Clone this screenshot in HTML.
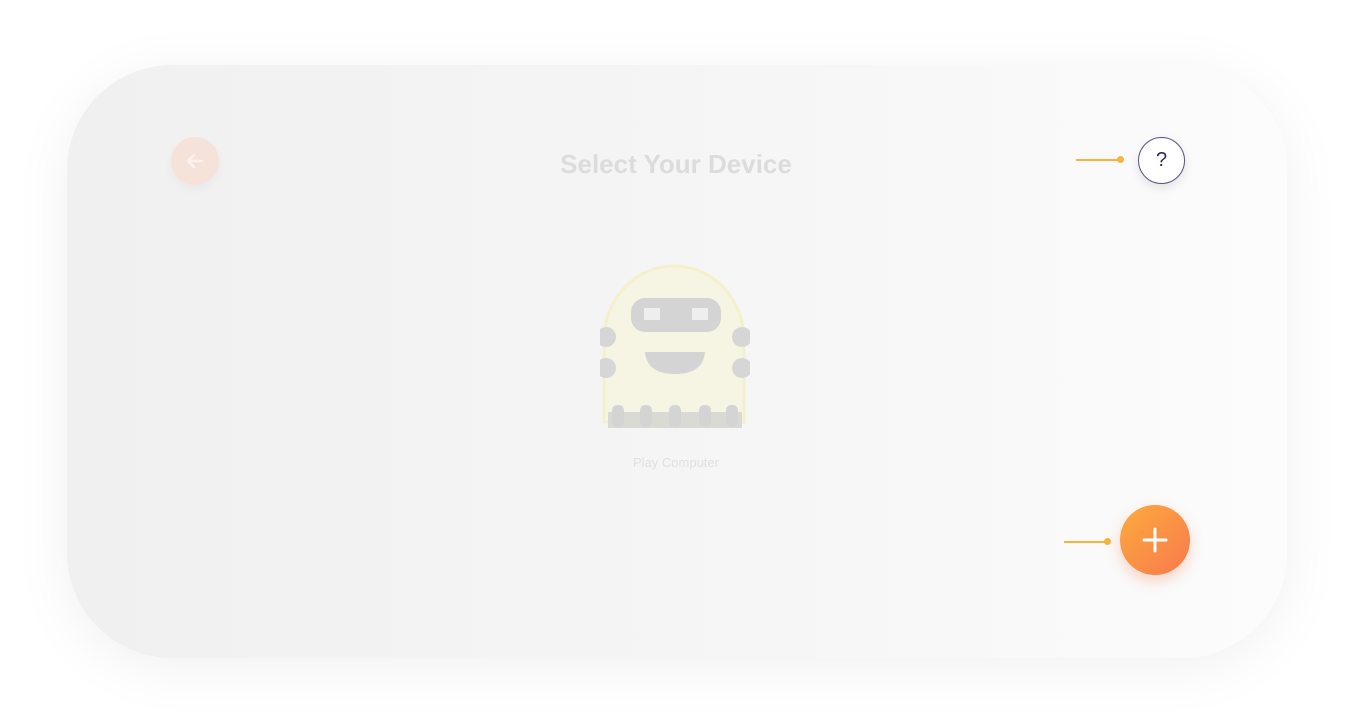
<!DOCTYPE html>
<html><head><meta charset="utf-8"><style>
html,body{margin:0;width:1352px;height:720px;background:#fff;overflow:hidden;font-family:"Liberation Sans",sans-serif}
.card{position:absolute;left:67px;top:65px;width:1220px;height:593px;border-radius:105px;background:linear-gradient(90deg,#f0f0f0,#f5f5f5 50%,#fcfcfc);box-shadow:0 10px 60px rgba(0,0,0,0.06)}
.back{position:absolute;left:171px;top:137px;width:48px;height:48px;border-radius:50%;background:#f5e3da;box-shadow:0 4px 10px rgba(0,0,0,0.04)}
.title{position:absolute;left:0;width:1352px;top:149px;text-align:center;font-size:26px;font-weight:bold;color:#dcdcdc}
.help{position:absolute;left:1138px;top:137px;width:45px;height:45px;border-radius:50%;border:1.5px solid #56508a;background:#fff;box-shadow:0 4px 10px rgba(0,0,0,0.1);text-align:center;line-height:45px;font-size:20px;color:#2e2a5a}
.line{position:absolute;height:2px;background:#f5b43c}
.dot{position:absolute;width:7px;height:7px;border-radius:50%;background:#f5b43c}
.plus{position:absolute;left:1120px;top:505px;width:70px;height:70px;border-radius:50%;background:linear-gradient(135deg,#fdaa3e,#f77a4d);box-shadow:0 6px 14px rgba(240,120,60,0.3)}
.label{position:absolute;left:0;width:1352px;top:455px;text-align:center;font-size:13px;color:#e0e0e0}
</style></head><body>
<div class="card"></div>
<div class="back"><svg width="48" height="48"><path d="M31 24H17M23 18l-6 6 6 6" stroke="#fbf1ec" stroke-width="2.5" fill="none" stroke-linecap="round"/></svg></div>
<div class="title">Select Your Device</div>
<div class="line" style="left:1076px;top:159px;width:44px"></div><div class="dot" style="left:1117px;top:156px"></div>
<div class="help">?</div>
<svg style="position:absolute;left:600px;top:262px" width="150" height="170">
<path d="M4 160V78C4 36 36 4 74 4S144 36 144 78V160Z" fill="#f6f4e2" stroke="#f5f0cc" stroke-width="3"/>
<rect x="31" y="36" width="90" height="34" rx="14" fill="#d4d4d4"/>
<rect x="44" y="46" width="16" height="12" fill="#eee"/><rect x="92" y="46" width="16" height="12" fill="#eee"/>
<path d="M45 90H105Q103 112 75 112Q47 112 45 90Z" fill="#d4d4d4"/>
<circle cx="6" cy="75" r="10" fill="#d6d6d6"/><circle cx="6" cy="106" r="10" fill="#d6d6d6"/>
<circle cx="142" cy="75" r="10" fill="#d6d6d6"/><circle cx="142" cy="106" r="10" fill="#d6d6d6"/>
<rect x="8" y="150" width="134" height="16" fill="#dadad4"/>
<g fill="#d4d4d4"><rect x="12" y="143" width="12" height="22" rx="5"/><rect x="40" y="143" width="12" height="22" rx="5"/><rect x="69" y="143" width="12" height="22" rx="5"/><rect x="99" y="143" width="12" height="22" rx="5"/><rect x="126" y="143" width="12" height="22" rx="5"/></g>
</svg>
<div class="label">Play Computer</div>
<div class="line" style="left:1064px;top:541px;width:44px"></div><div class="dot" style="left:1104px;top:538px"></div>
<div class="plus"><svg width="70" height="70"><path d="M35 24V46M24 35H46" stroke="#fff" stroke-width="3" stroke-linecap="round"/></svg></div>
</body></html>
